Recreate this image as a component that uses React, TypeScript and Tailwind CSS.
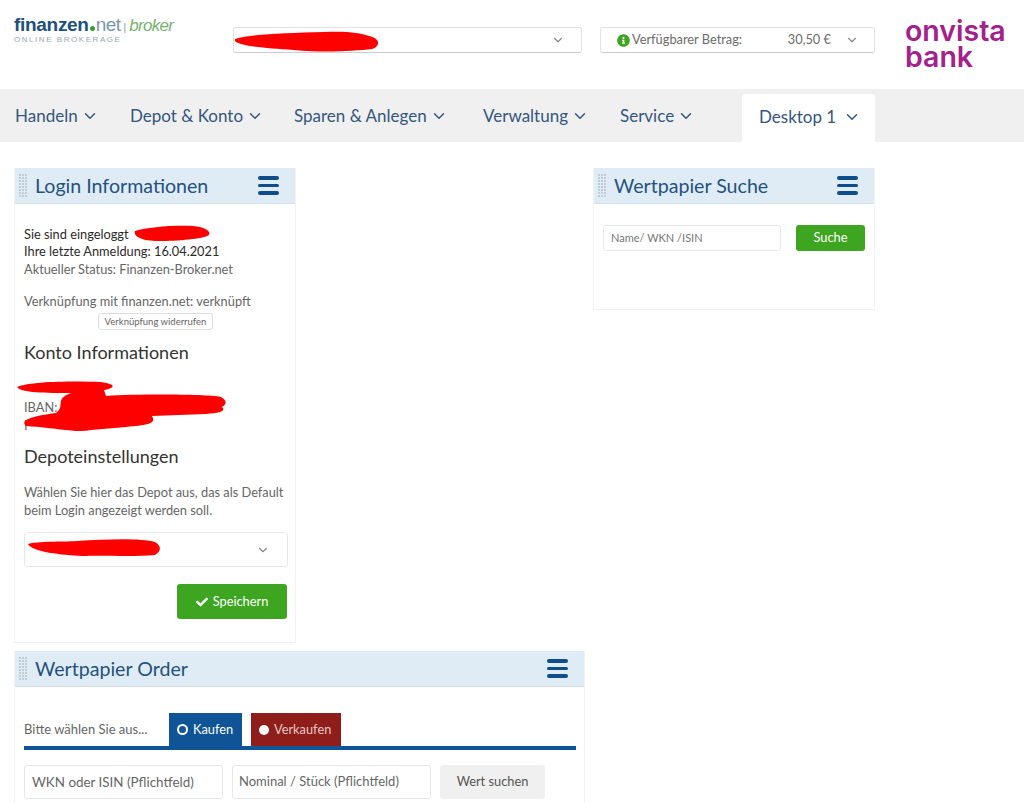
import { ChevronDown } from "lucide-react";
import { FaCheck, FaInfoCircle } from "react-icons/fa";

const navItems = [
  { label: "Handeln", width: "w-[115px]" },
  { label: "Depot & Konto", width: "w-[164px]" },
  { label: "Sparen & Anlegen", width: "w-[189px]" },
  { label: "Verwaltung", width: "w-[137px]" },
  { label: "Service", width: "w-[122px]" },
];

// hand-drawn redaction marks in the screenshot
function Scribble({ className, d, viewBox }: { className: string; d: string; viewBox: string }) {
  return (
    <svg className={`absolute ${className}`} viewBox={viewBox} preserveAspectRatio="none">
      <path d={d} fill="#fe0000" />
    </svg>
  );
}

function GripDots() {
  return (
    <div className="grid grid-cols-3 gap-[1px] w-[8px] mr-[8px]">
      {Array.from({ length: 24 }).map((_, i) => (
        <span key={i} className="w-[2px] h-[2px] bg-[#c3ccd4]" />
      ))}
    </div>
  );
}

function Burger() {
  return (
    <div className="flex flex-col gap-[4px] w-[21px]">
      <span className="h-[3.5px] rounded-full bg-[#0f4c8a]" />
      <span className="h-[3.5px] rounded-full bg-[#0f4c8a]" />
      <span className="h-[3.5px] rounded-full bg-[#0f4c8a]" />
    </div>
  );
}

function PanelHeader({ title }: { title: string }) {
  return (
    <div className="h-[36px] bg-[#e0ecf5] border-b border-[#d5e1ea] flex items-center pl-[4px] pr-[16px]">
      <GripDots />
      <span className="text-[19.6px] text-[#24527f] flex-1 leading-none">{title}</span>
      <Burger />
    </div>
  );
}

export default function App() {
  return (
    <div className="h-[803px] overflow-hidden bg-white text-[12.8px] text-[#666] font-['Lato','Open_Sans',sans-serif]">
      {/* top bar */}
      <header className="h-[89px] flex relative">
        <div className="w-[233px] pl-[14px] pt-[15px]">
          <div className="flex items-baseline leading-none text-[19px] font-['Liberation_Sans',sans-serif]">
            <span className="font-bold text-[#1b4f80] tracking-[-0.3px]">finanzen</span>
            <span className="w-[5px] h-[5px] rounded-full bg-[#3f9a35] mx-[1px]" />
            <span className="text-[#7a96ad] font-light tracking-[-0.5px]">net</span>
            <span className="text-[#7a96ad] text-[10px] mx-[3px]">|</span>
            <span className="italic text-[#74b26c] text-[17px] tracking-[-0.7px]">broker</span>
          </div>
          <div className="mt-[2px] text-[8px] tracking-[1.55px] text-[#9aa6ae] leading-none font-['Liberation_Sans',sans-serif]">ONLINE BROKERAGE</div>
        </div>
        <div className="mt-[27px] w-[349px] h-[26px] rounded-[3px] border border-[#e3e3e3] border-b-[#ccc] flex items-center justify-end pr-[16px] relative">
          <ChevronDown className="w-[14px] h-[14px] text-[#888]" />
          <Scribble
            className="left-0 top-[3px] w-[147px] h-[21px]"
            viewBox="0 0 147 21"
            d="M1 8 C20 3 50 2 90 1 C115 0 125 2 135 5 C146 7 147 15 138 18 C120 20 90 22 60 19 C30 17 5 15 1 10 Z"
          />
        </div>
        <div className="ml-[18px] mt-[27px] w-[275px] h-[26px] rounded-[3px] border border-[#e3e3e3] border-b-[#ccc] flex items-center pl-[16px] pr-[15px] text-[#6b6b6b]">
          <FaInfoCircle className="w-[13px] h-[13px] text-[#3da51f] mr-[2px]" />
          <span className="flex-1">Verfügbarer Betrag:</span>
          <span className="mr-[14px]">30,50 €</span>
          <ChevronDown className="w-[14px] h-[14px] text-[#888]" />
        </div>
        <div className="ml-[30px] mt-[18px] text-[#a4208c] font-semibold text-[28.5px] leading-[26px] font-['Inter',sans-serif]">
          <div>onvista</div>
          <div>bank</div>
        </div>
      </header>

      {/* main navigation */}
      <nav className="h-[53px] bg-[#f0f0f0] flex items-end pl-[15px] text-[17px] text-[#34567f]">
        {navItems.map((item) => (
          <div key={item.label} className={`${item.width} h-[53px] flex items-center shrink-0`}>
            {item.label}
            <ChevronDown className="w-[18px] h-[18px] ml-[3px]" />
          </div>
        ))}
        <div className="w-[133px] h-[48px] bg-white rounded-t-[3px] flex items-center pl-[17px] pb-[3px] shrink-0">
          <span className="flex-1">Desktop 1</span>
          <ChevronDown className="w-[18px] h-[18px] mr-[14px]" />
        </div>
      </nav>

      {/* widgets */}
      <main className="pt-[26px] pl-[14px] grid grid-cols-[282px_281px_282px] gap-x-[8px] gap-y-[8px] items-start">
        <section className="border border-t-0 border-[#f2f2f2] h-[475px] col-start-1">
          <PanelHeader title="Login Informationen" />
          <div className="pl-[9px] pr-[7px] pt-[22px] relative">
            <div className="leading-[17px] text-[#2b2b2b]">Sie sind eingeloggt</div>
            <div className="leading-[17px] text-[#2b2b2b]">Ihre letzte Anmeldung: 16.04.2021</div>
            <div className="leading-[18px]">Aktueller Status: Finanzen-Broker.net</div>
            <div className="leading-[18px] mt-[14px]">Verknüpfung mit finanzen.net: verknüpft</div>
            <div className="flex justify-center mt-[3px] mr-[1px]">
              <button className="h-[17px] px-[6px] border border-[#ddd] rounded-[3px] text-[9.5px] leading-none text-[#666]">Verknüpfung widerrufen</button>
            </div>
            <div className="mt-[11px] text-[18px] leading-[22px] text-[#333]">Konto Informationen</div>
            <div className="mt-[35px] leading-[18px]">IBAN:</div>
            <div className="h-[18px] leading-[18px]">P</div>
            <div className="mt-[11px] text-[18px] leading-[22px] text-[#333]">Depoteinstellungen</div>
            <div className="mt-[16px] leading-[18px] whitespace-nowrap">
              Wählen Sie hier das Depot aus, das als Default
              <br />
              beim Login angezeigt werden soll.
            </div>
            <div className="mt-[13px] h-[35px] border border-[#e8e8e8] rounded-[3px] flex items-center justify-end pr-[17px]">
              <ChevronDown className="w-[14px] h-[14px] text-[#888]" />
            </div>
            <div className="flex justify-end mt-[17px]">
              <button className="w-[110px] h-[35px] mr-[1px] bg-[#3da51f] rounded-[3px] text-white flex items-center justify-center gap-[5px]">
                <FaCheck className="w-[12px] h-[12px]" />
                Speichern
              </button>
            </div>
            <Scribble
              className="left-[118px] top-[21px] w-[78px] h-[17px]"
              viewBox="0 0 78 17"
              d="M2 6 C15 2 40 0 60 1 C72 2 78 6 76 10 C70 14 45 16 25 16 C10 16 0 12 2 6 Z"
            />
            <Scribble
              className="left-[1px] top-[177px] w-[210px] h-[52px]"
              viewBox="0 0 210 52"
              d="M1 6 C15 0 60 0 85 1 C100 3 100 7 88 9 L90 15 C120 13 190 13 205 16 C212 20 210 24 206 26 C210 30 205 32 190 33 L136 35 C140 42 135 44 110 46 L75 49 C60 52 50 48 10 45 C5 40 10 36 40 32 C45 28 44 26 45 20 C46 16 50 14 55 12 C30 12 5 12 1 6 Z"
            />
            <Scribble
              className="left-[12px] top-[334px] w-[133px] h-[19px]"
              viewBox="0 0 133 19"
              d="M1 6 C10 3 35 4 50 3 C80 1 115 0 128 4 C135 8 134 14 128 17 C105 19 75 17 55 18 C35 17 5 14 1 6 Z"
            />
          </div>
        </section>

        <section className="border border-t-0 border-[#f2f2f2] h-[142px] col-start-3 row-start-1">
          <PanelHeader title="Wertpapier Suche" />
          <div className="pl-[9px] pr-[9px] pt-[21px] flex justify-between">
            <div className="w-[178px] h-[26px] border border-[#e8e8e8] rounded-[3px] text-[11px] flex items-center pl-[7px] text-[#777]">Name/ WKN /ISIN</div>
            <button className="w-[69px] h-[26px] bg-[#3da51f] rounded-[3px] text-white">Suche</button>
          </div>
        </section>

        <section className="border border-t-0 border-[#f2f2f2] col-start-1 col-span-2 w-[571px] row-start-2 h-[200px]">
          <PanelHeader title="Wertpapier Order" />
          <div className="px-[9px] pt-[26px]">
            <div className="flex items-end h-[33px]">
              <span className="w-[145px] self-center text-[13px]">Bitte wählen Sie aus...</span>
              <div className="w-[73px] h-[33px] bg-[#0f5496] text-white flex items-center pl-[8px] gap-[5px]">
                <span className="w-[11px] h-[11px] rounded-full bg-[#0f5496] border-[2.5px] border-white" />
                Kaufen
              </div>
              <div className="w-[90px] h-[33px] ml-[9px] bg-[#8f1d19] text-[#e8c8c8] flex items-center pl-[8px] gap-[5px]">
                <span className="w-[10px] h-[10px] rounded-full bg-white" />
                Verkaufen
              </div>
            </div>
            <div className="h-[4px] bg-[#0f5496] w-[552px]" />
            <div className="flex gap-[9px] mt-[15px]">
              <div className="w-[199px] h-[34px] border border-[#e8e8e8] rounded-[3px] flex items-center pl-[7px] text-[13.4px]">WKN oder ISIN (Pflichtfeld)</div>
              <div className="w-[199px] h-[34px] border border-[#e8e8e8] rounded-[3px] flex items-center pl-[6px] text-[13px]">Nominal / Stück (Pflichtfeld)</div>
              <button className="w-[105px] h-[34px] bg-[#f0f0f0] rounded-[3px] text-[#555]">Wert suchen</button>
            </div>
          </div>
        </section>
      </main>
    </div>
  );
}
